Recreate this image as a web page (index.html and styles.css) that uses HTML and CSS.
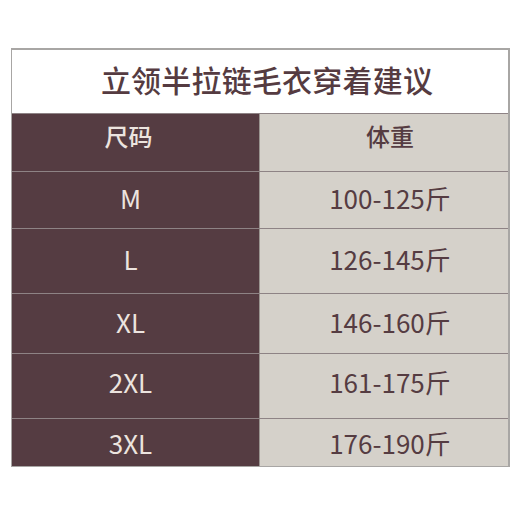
FILE: index.html
```html
<!DOCTYPE html>
<html lang="zh">
<head>
<meta charset="utf-8">
<link rel="stylesheet" href="styles.css">
</head>
<body>
<div class="chart">
  <div class="title">立领半拉链毛衣穿着建议</div>
  <div class="row head"><div class="size">尺码</div><div class="weight">体重</div></div>
  <div class="row r-m"><div class="size">M</div><div class="weight">100-125斤</div></div>
  <div class="row r-l"><div class="size">L</div><div class="weight">126-145斤</div></div>
  <div class="row r-xl"><div class="size">XL</div><div class="weight">146-160斤</div></div>
  <div class="row r-2xl"><div class="size">2XL</div><div class="weight">161-175斤</div></div>
  <div class="row r-3xl"><div class="size">3XL</div><div class="weight">176-190斤</div></div>
</div>
</body>
</html>
```

FILE: styles.css
```css
html, body {
  margin: 0;
  padding: 0;
  background: #ffffff;
}
body {
  font-family: "Noto Sans CJK SC", "Noto Sans", sans-serif;
  width: 520px;
  height: 520px;
}
.chart {
  margin: 48px 0 0 11px;
  width: 496px;
  border: 1px solid #a8a6a4;
  border-top-width: 2px;
  border-right-width: 2px;
}
.title {
  height: 63px;
  display: flex;
  align-items: center;
  justify-content: center;
  font-size: 30px;
  font-weight: 500;
  color: #553b41;
  letter-spacing: 0.2px;
  padding-left: 14px;
  padding-bottom: 6px;
  box-sizing: border-box;
}
.row {
  display: grid;
  grid-template-columns: 248px 1fr;
  border-top: 1.5px solid #8e8385;
}
.row > div {
  display: flex;
  align-items: center;
  justify-content: center;
  font-size: 26px;
  box-sizing: border-box;
}
.size {
  background: #553c42;
  color: #ece4df;
  padding-right: 10px;
  border-right: 1.5px solid #9a9490;
}
.weight {
  background: #d5d1ca;
  color: #553c42;
  padding-left: 12px;
}
.head > div { font-weight: 500; font-size: 24px; padding-bottom: 14px; }
.head > .size { padding-right: 14px; }
.head { height: 57px; }
.r-m { height: 56px; }
.r-l { height: 64px; }
.r-xl { height: 59px; }
.r-2xl { height: 64px; }
.r-3xl { height: 47px; }
.r-m > div, .r-l > div { padding-bottom: 6px; }
.r-xl > div { padding-bottom: 5px; }
.r-2xl > div { padding-bottom: 10px; }
.r-3xl > div { padding-bottom: 1px; }
```
